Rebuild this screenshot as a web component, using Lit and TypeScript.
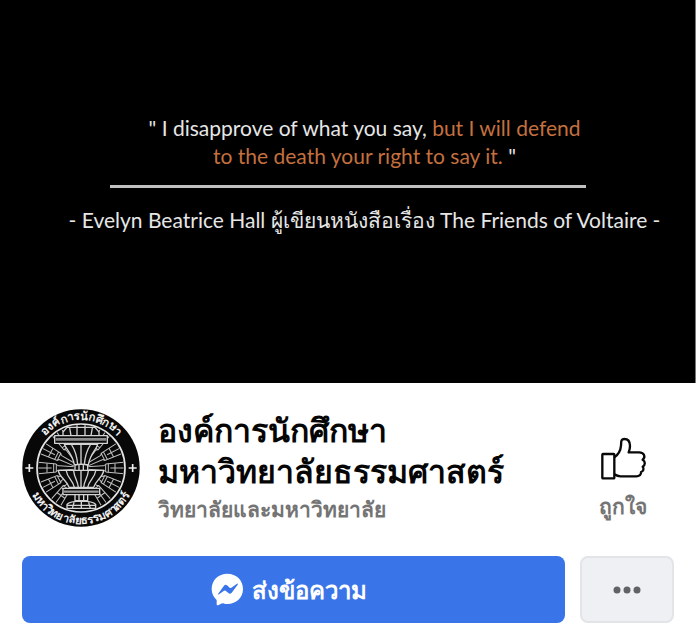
import { LitElement, html, css, svg } from "lit";
import { customElement } from "lit/decorators.js";

@customElement("page-cover")
class PageCover extends LitElement {
  static styles = css`
    :host {
      display: block;
    }
    .cover {
      box-sizing: border-box;
      min-height: 383px;
      margin: 0;
      padding: 114px 0 0;
      background: #000;
      border-right: 1px solid #777;
      color: #e6e6e6;
      font: 21px/28px Lato, "Noto Sans", sans-serif;
      text-align: center;
    }
    .quote {
      margin: 0;
    }
    .quote,
    .source {
      padding-left: 34px;
    }
    .accent {
      color: #c4703f;
    }
    .rule {
      width: 476px;
      max-width: 100%;
      height: 3px;
      margin: 15px auto 18px;
      border: 0;
      background: #c0c0c0;
    }
  `;

  render() {
    return html`
      <figure class="cover">
        <blockquote class="quote">
          " I disapprove of what you say, <span class="accent">but I will defend<br />to the death your right to say it.</span> "
        </blockquote>
        <hr class="rule" />
        <figcaption class="source">- Evelyn Beatrice Hall ผู้เขียนหนังสือเรื่อง The Friends of Voltaire -</figcaption>
      </figure>
    `;
  }
}

@customElement("page-emblem")
class PageEmblem extends LitElement {
  static styles = css`
    :host {
      display: block;
    }
    .emblem {
      display: block;
      width: 100%;
    }
    .ring {
      fill: #f0f0f0;
      font: 700 34px "Noto Sans", "Liberation Sans", sans-serif;
    }
  `;

  private spoke(angle: number) {
    return svg`
      <g transform="rotate(${angle} 202 204)">
        <path d="M224 200L272 197M224 208L272 211M276 192V216M284 190V218M272 197L276 192L328 187M272 211L276 216L328 221M290 204H330M304 190V218" />
      </g>`;
  }

  render() {
    return html`
      <svg class="emblem" viewBox="25 27 354 354" role="img" aria-label="ตราองค์การนักศึกษา">
        <defs>
          <path id="top" d="M57 204A145 145 0 0 1 347 204" />
          <path id="bottom" d="M34 204A168 168 0 0 0 370 204" />
        </defs>
        <circle cx="202" cy="204" r="176" fill="#080808" />
        <g fill="none" stroke="#c0c0c0" stroke-width="3">
          ${[0, 27, 54, 126, 153, 180, 207, 236, 304, 333].map((a) => this.spoke(a))}
        </g>
        <circle cx="202" cy="204" r="132" fill="none" stroke="#e4e4e4" stroke-width="5" />
        <g fill="#0c0c0c" stroke="#d4d4d4" stroke-width="4" stroke-linejoin="round">
          <path d="M152 133C158 150 176 160 182 194H224C230 160 248 150 252 133Z" />
          <path d="M174 135C184 150 190 170 192 194M202 135V194M230 135C220 150 214 170 212 194" fill="none" />
          <path d="M148 107V96L160 82H244L256 96V107Z" />
          <path d="M172 107L168 84M190 107V76M214 107V76M232 107L236 84" />
          <path d="M123 107H281V130H123Z" />
          <path d="M126 118H278" stroke="#8c8c8c" stroke-width="8" />
          <path d="M184 195C193 192 212 192 222 195V211C212 214 193 214 184 211ZM196 195V211M209 195V211" />
          <path d="M134 211H270C268 232 248 238 240 262H166C158 238 136 232 134 211Z" />
          <path d="M158 213C162 236 176 238 182 262M180 213C182 234 192 240 194 262M202 213V262M224 213C222 234 212 240 210 262M246 213C242 236 228 238 222 262" fill="none" />
          <path d="M148 265H258V284H148Z" />
          <path d="M151 275H255" stroke="#999" stroke-width="7" />
          <path d="M184 284H222V302H184ZM196 284V302M210 284V302" />
          <path d="M160 313C170 300 236 300 246 313V325H160ZM160 316H246M182 304L176 325M224 304L230 325M203 302V325" />
        </g>
        <path d="M35 204H59M47 192V216M345 204H369M357 192V216" stroke="#eee" stroke-width="5" />
        <text class="ring" text-anchor="middle"><textPath href="#top" startOffset="50%">องค์การนักศึกษา</textPath></text>
        <text class="ring" text-anchor="middle"><textPath href="#bottom" startOffset="50%">มหาวิทยาลัยธรรมศาสตร์</textPath></text>
      </svg>
    `;
  }
}

@customElement("app-root")
class AppRoot extends LitElement {
  static styles = css`
    :host {
      display: block;
      min-height: 100vh;
      background: #fff;
      font-family: "Noto Sans", "Liberation Sans", sans-serif;
    }
    .profile {
      display: flex;
      align-items: center;
      padding: 26px 22px 0;
    }
    .avatar {
      flex: 0 0 118px;
      margin-right: 18px;
    }
    .titles {
      flex: 1;
      min-width: 0;
    }
    .name {
      margin: 0;
      color: #050505;
      font-size: 32px;
      font-weight: 700;
      line-height: 41px;
    }
    .category {
      margin: 0;
      color: #747474;
      font-size: 21px;
      line-height: 36px;
      font-weight: 600;
    }
    .like {
      display: flex;
      flex-direction: column;
      align-items: center;
      flex: 0 0 102px;
      gap: 11px;
      padding: 20px 0 0;
      border: 0;
      background: none;
      color: #747474;
      font: 600 21px/28px "Noto Sans", "Liberation Sans", sans-serif;
    }
    .thumb {
      width: 48px;
      height: 45px;
    }
    .actions {
      display: flex;
      gap: 15px;
      padding: 29px 22px 14px;
    }
    .message,
    .more {
      display: flex;
      align-items: center;
      justify-content: center;
      box-sizing: border-box;
      height: 67px;
      padding: 0;
      border: 0;
      border-radius: 8px;
    }
    .message {
      flex: 1;
      gap: 8px;
      padding-right: 10px;
      background: #3975e8;
      color: #fff;
      font: 600 24px/40px "Noto Sans", "Liberation Sans", sans-serif;
    }
    .bubble {
      width: 33px;
      height: 33px;
    }
    .more {
      flex: 0 0 94px;
      background: #eff0f4;
      border: 2px solid #e3e4e8;
    }
    .dots {
      width: 28px;
      height: 8px;
    }
  `;

  render() {
    return html`
      <page-cover></page-cover>
      <header class="profile">
        <page-emblem class="avatar"></page-emblem>
        <div class="titles">
          <h1 class="name">องค์การนักศึกษา<br />มหาวิทยาลัยธรรมศาสตร์</h1>
          <p class="category">วิทยาลัยและมหาวิทยาลัย</p>
        </div>
        <button class="like" type="button">
          <svg class="thumb" viewBox="55 50 144 135" fill="none" stroke="#080808" stroke-width="7" stroke-linejoin="round" aria-hidden="true">
            <rect x="65" y="104" width="36" height="73" rx="2" />
            <path d="M101 114C111 107 120 92 121 79C122 67 120 59 131 59C144 59 148 69 148 80C148 87 146 94 144 99H175C192 99 195 114 186 121C195 126 194 137 186 142C191 148 188 156 181 158C182 166 176 171 167 171H120C112 171 107 169 101 165" />
          </svg>
          ถูกใจ
        </button>
      </header>
      <div class="actions">
        <button class="message" type="button">
          <svg class="bubble" viewBox="60 65 99 99" aria-hidden="true">
            <path d="M109 67C82 67 62 86 62 113C62 127 68 138 77 146V159C77 162 80 163 83 161L93 156C98 158 103 158 109 158C136 158 156 139 156 113C156 86 136 67 109 67Z" fill="#fff" />
            <path d="M81 128L99 103Q103 98 108 102L116 109Q118 111 121 109L138 97Q142 96 140 100L122 124Q118 129 113 126L104 118Q101 117 99 118L84 129Q80 131 81 128Z" fill="#3975e8" />
          </svg>
          ส่งข้อความ
        </button>
        <button class="more" type="button" aria-label="เพิ่มเติม">
          <svg class="dots" viewBox="0 0 28 8" fill="#606266" aria-hidden="true">
            <circle cx="4" cy="4" r="3.5" /><circle cx="14" cy="4" r="3.5" /><circle cx="24" cy="4" r="3.5" />
          </svg>
        </button>
      </div>
    `;
  }
}
